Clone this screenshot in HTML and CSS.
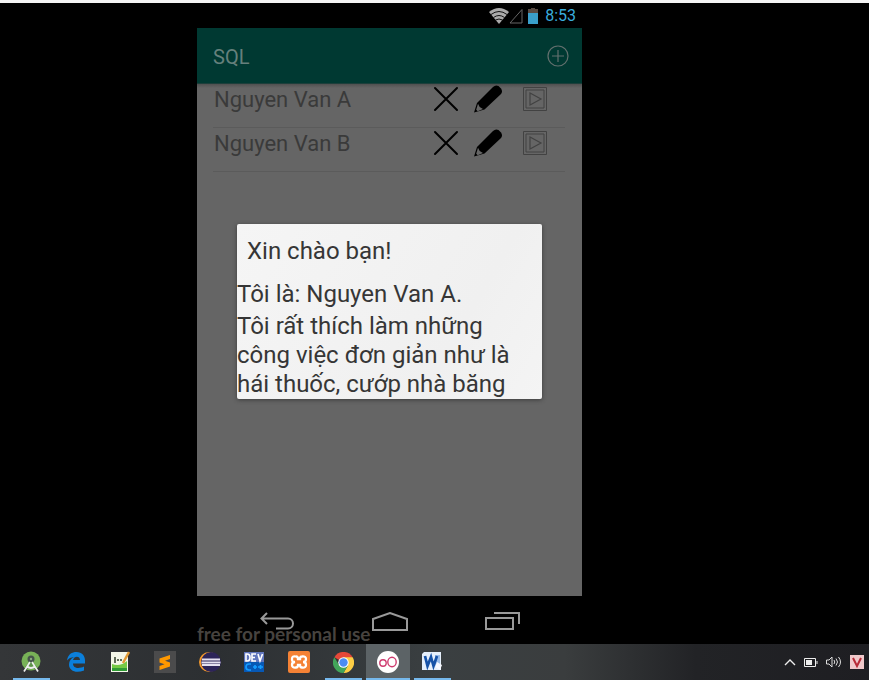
FILE: index.html
```html
<!DOCTYPE html>
<html lang="vi">
<head>
<meta charset="utf-8">
<meta name="viewport" content="width=device-width, initial-scale=1">
<title>SQL</title>
<link rel="stylesheet" href="styles.css">
</head>
<body>
<svg class="defs" aria-hidden="true">
  <symbol id="cross" viewBox="0 0 26 26"><path d="M2 2 24 24M24 2 2 24" fill="none" stroke="#000" stroke-width="2" stroke-linecap="round"/></symbol>
  <symbol id="pencil" viewBox="0 0 28 28"><path fill="#000" d="M0 27.500 3 18 19 2Q21.500-.5 24.500 1L27 3.500Q29 6.500 27 9L10.500 24.500Z"/><path fill="#666" d="m4 18.800 1.700 3.200 3.300 2-5.300 2.200-1.500-1.500Z"/></symbol>
  <symbol id="play" viewBox="0 0 24 24"><g fill="none" stroke="#424242"><path d="M.5.5h23v23H.5zM3 3h18v18H3z"/><path d="M7 6v12l11-6z" stroke-width="1.200"/></g></symbol>
</svg>
<main class="desktop">
  <section class="phone">
    <header class="status">
      <svg width="20" height="16" viewBox="0 0 20 16"><path fill="#aaa" d="M0 4Q10-4 20 4L10 16Z"/><path d="M2 6.500q8-6 16 0M4.500 9.500q5.500-4 11 0M6.500 12q3.500-2 7 0" fill="none" stroke="#111"/></svg>
      <svg width="14" height="16" viewBox="0 0 14 16"><path d="M1 15 13 1.500V15Z" fill="none" stroke="#666"/></svg>
      <svg class="battery" width="10" height="16" viewBox="0 0 10 16"><path fill="#594b43" d="M3 0h4v1h3v5H0V1h3z"/><path fill="#3a9fca" d="M0 5h10v11H0z"/></svg>
      <time>8:53</time>
    </header>
    <div class="appbar">
      <h1>SQL</h1>
      <button class="add" aria-label="Add"><svg width="22" height="22" viewBox="0 0 22 22"><g fill="none" stroke="#62706e" stroke-width="1.200"><circle cx="11" cy="11" r="10"/><path d="M11 5v12M5 11h12"/></g></svg></button>
    </div>
    <div class="content">
      <ul class="people">
        <li><span class="name">Nguyen Van A</span>
          <button aria-label="Delete"><svg width="26" height="26"><use href="#cross"/></svg></button>
          <button aria-label="Edit"><svg width="28" height="28"><use href="#pencil"/></svg></button>
          <button class="view" aria-label="Open"><svg width="24" height="24"><use href="#play"/></svg></button></li>
        <li><span class="name">Nguyen Van B</span>
          <button aria-label="Delete"><svg width="26" height="26"><use href="#cross"/></svg></button>
          <button aria-label="Edit"><svg width="28" height="28"><use href="#pencil"/></svg></button>
          <button class="view" aria-label="Open"><svg width="24" height="24"><use href="#play"/></svg></button></li>
      </ul>
      <div class="dialog" role="dialog" aria-labelledby="greeting">
        <h2 id="greeting">Xin chào bạn!</h2>
        <p class="who">Tôi là: Nguyen Van A.</p>
        <p>Tôi rất thích làm những<br>công việc đơn giản như là<br>hái thuốc, cướp nhà băng</p>
      </div>
    </div>
    <nav class="softkeys">
      <span class="watermark">free for personal use</span>
      <button aria-label="Back"><svg width="34" height="18" viewBox="0 0 34 18"><path d="M7 1 1.500 6.500 7 12M2 6.500h26a5 5 0 0 1 0 10H16" fill="none" stroke="#999" stroke-width="2"/></svg></button>
      <button aria-label="Home"><svg width="36" height="19" viewBox="0 0 36 19"><path d="M1 18V7L18 1l17 6v11Z" fill="none" stroke="#999" stroke-width="2"/></svg></button>
      <button aria-label="Recent"><svg width="35" height="18" viewBox="0 0 35 18"><path d="M1 6h27v11H1zM9 1h25v11" fill="none" stroke="#999" stroke-width="2"/></svg></button>
    </nav>
  </section>
</main>
<footer class="taskbar">
  <div class="apps">
    <button class="open" aria-label="Android Studio"><svg width="22" height="22" viewBox="0 0 22 22"><circle cx="11" cy="10" r="9.500" fill="#78b257"/><path d="m5 16 6-7 6 7-3 2H8z" fill="#5c9348"/><circle cx="11" cy="8" r="3.500" fill="#46554b"/><circle cx="11" cy="8" r="1.200" fill="#8bab80"/><path d="M10 11 4 20.500M12 11l6 9.500M6.500 15q4.500 4 9 0" fill="none" stroke="#eee" stroke-width="1.700"/></svg></button>
    <button aria-label="Edge"><svg width="20" height="22" viewBox="0 0 20 22"><path fill="#0b7fda" d="M1 9.500C2 3 6 1 10.500 1 16 1 19 5 19 9.500v3H7c0 5 6 5.500 11 3v4C10 22.500 3 20 3 13.500 3 10 5 7.500 8 6 5 6.300 2.500 7.500 1 9.500m6-.5h7c0-4.500-6-4.500-7 0"/></svg></button>
    <button aria-label="Notepad"><svg width="20" height="22" viewBox="0 0 20 22"><path fill="#f4f7e8" d="M1 1h17v20H1z"/><path fill="#75ca45" d="M2 13q8 3 15-3v10H2z"/><path fill="#309c35" d="M2 17h15v3H2z"/><path d="M5 6v6M7 9h2M10 9h2" stroke="#30402a" stroke-width="1.500"/><path d="m13 12 6-11" stroke="#e29a34" stroke-width="2.500"/></svg></button>
    <button aria-label="Sublime Text"><svg width="22" height="22" viewBox="0 0 22 22"><path fill="#4b4b4c" d="M0 0h22v22H0z"/><path fill="#ff9800" d="M5.500 7.500 16 4v4l-5 1.700 5 1.800v4L5.500 19v-4l5-1.700-5-1.800z"/></svg></button>
    <button aria-label="Eclipse"><svg width="22" height="22" viewBox="0 0 22 22"><circle cx="10" cy="11" r="10" fill="#f79a2c"/><circle cx="12" cy="11" r="10" fill="#2c2459"/><path stroke="#e4e0f0" stroke-width="1.800" d="M3 8.500h18M2.500 11.500h19M3 14h18"/></svg></button>
    <button aria-label="Dev-C++"><svg width="20" height="20" viewBox="0 0 20 20"><path fill="#6176bd" d="M0 0h20v10H0z"/><path fill="#0758b5" d="M0 10h20v10H0z"/><path d="M2 2v7h1q3 0 3-3.500T3 2ZM12 2H8v7h4M8 5.500h3M14 2l2 7 2.500-7" fill="none" stroke="#fff" stroke-width="1.600"/><path d="M7 12H5q-3 0-3 3t3 3h2M9 15h4m-2-2v4M14 15h5m-2.500-2v4" fill="none" stroke="#159dff" stroke-width="1.700"/></svg></button>
    <button aria-label="XAMPP"><svg width="22" height="22" viewBox="0 0 22 22"><rect width="22" height="22" rx="2" fill="#f58235"/><path d="M8 5.500Q4 4.500 4 8T7 11q-3 0-3 3t4 2.500q2 0 2-2.500h2q0 2.500 2 2.500 4 .5 4-2.500T15 11q3 0 3-3t-4-2.500q-2 0-2 2.500h-2Q10 5.500 8 5.500Z" fill="none" stroke="#fff" stroke-width="2.300"/></svg></button>
    <button class="open" aria-label="Chrome"><svg width="21" height="21" viewBox="0 0 20 20"><path fill="#e54839" d="M10 10 1.300 5A10 10 0 0 1 18.700 5Z"/><path fill="#fdce45" d="M10 5h8.700A10 10 0 0 1 10 20l4-7Z"/><path fill="#42a65a" d="M1.300 5A10 10 0 0 0 10 20l4.300-7.500L5.500 12Z"/><circle cx="10" cy="10" r="5" fill="#fff"/><circle cx="10" cy="10" r="4" fill="#4b8cf3"/></svg></button>
    <button class="open current" aria-label="Genymotion"><svg width="22" height="22" viewBox="0 0 22 22"><circle cx="11" cy="11" r="11" fill="#fff"/><g fill="none" stroke="#cf3c70" stroke-width="1.400"><circle cx="6" cy="12" r="3.200"/><ellipse cx="15" cy="11" rx="4.200" ry="4.700"/></g></svg></button>
    <button class="open" aria-label="Word"><svg width="21" height="20" viewBox="0 0 21 20"><path fill="#e5effb" d="M2 0h17v18H0V2z"/><path fill="#9abce8" d="M13 3h5v12h-5z"/><path d="m3 4 2.500 10L9 5l2.500 9L15 4" fill="none" stroke="#1652a7" stroke-width="2.700"/><path fill="#f7f9ff" d="m15 10 5 3-2 5-5-3z"/></svg></button>
  </div>
  <div class="tray">
    <button aria-label="Show hidden icons"><svg width="12" height="8" viewBox="0 0 12 8"><path d="m1 7 5-5 5 5" fill="none" stroke="#eee" stroke-width="1.400"/></svg></button>
    <button aria-label="Battery"><svg width="14" height="9" viewBox="0 0 14 9"><path d="M.5.5h11v8H.5zM13 3v3" fill="none" stroke="#eee"/><path fill="#eee" d="M2 2h6v5H2z"/></svg></button>
    <button aria-label="Volume"><svg width="16" height="12" viewBox="0 0 16 12"><path d="M.5 4v4H3l3 3V1L3 4ZM8 4q1.500 2 0 4M10 2.500q3 3.500 0 7M12.500 1q4 5 0 10" fill="none" stroke="#ddd"/></svg></button>
    <button aria-label="Vietnamese keyboard"><svg width="14" height="14" viewBox="0 0 14 14"><path fill="#f0c9cb" d="M0 0h14v14H0z"/><path d="m3 3 4 8 4-8" fill="none" stroke="#b82b37" stroke-width="2"/></svg></button>
  </div>
</footer>
</body>
</html>
```
FILE: styles.css
```css
* { box-sizing: border-box; }
body {
  margin: 0;
  min-height: 100vh;
  display: flex;
  flex-direction: column;
  background: #000;
  border-top: 3px solid #f4f4f4;
  font-family: Roboto, "Noto Sans", sans-serif;
}
h1, h2, p, ul { margin: 0; padding: 0; font-weight: 400; }
button { border: 0; padding: 0; background: none; display: grid; place-items: center; }
svg { display: block; }
.defs { position: absolute; width: 0; height: 0; }

.desktop {
  flex: 1;
  display: grid;
  grid-template-columns: 197px minmax(300px, 385px) 1fr;
}
.phone { grid-column: 2; display: flex; flex-direction: column; }
.status {
  height: 25px;
  display: flex;
  align-items: center;
  justify-content: flex-end;
  padding-right: 6px;
  color: #3aaddc;
  font-size: 16px;
}
.battery { margin: 0 7px 0 5px; }

.appbar {
  height: 56px;
  padding: 0 13px 0 16px;
  display: flex;
  align-items: center;
  justify-content: space-between;
  background: #003932;
  border-bottom: 1px solid #1d3f3b;
}
.appbar h1 { font-size: 20px; line-height: 24px; padding-top: 2px; color: #66807c; }

.content {
  flex: 1;
  padding: 0 17px 0 16px;
  background: linear-gradient(#505050, #656565 4px);
}
.people { list-style: none; }
.people li {
  height: 44px;
  display: flex;
  align-items: center;
  padding: 0 18px 14px 1px;
  border-bottom: 1px solid #5b5b5b;
}
.name { flex: 1; font-size: 22px; line-height: 30px; padding-top: 2px; color: #3a3a3a; }
.people button { width: 42px; height: 28px; }
.people .view { width: 24px; margin-left: 14px; }

.dialog {
  margin: 52px 23px 0 24px;
  height: 175px;
  padding-top: 13px;
  background: linear-gradient(120deg, #f5f5f5, #f0f0f0 70%, #f4f4f4);
  border-radius: 2px;
  box-shadow: 0 1px 4px #3c3c3c;
  color: #363636;
  font-size: 24px;
  line-height: 29px;
  white-space: nowrap;
}
.dialog h2 { font-size: 24px; padding-left: 10px; margin-bottom: 14px; }
.who { margin-bottom: 3px; }

.softkeys {
  position: relative;
  height: 48px;
  display: flex;
  justify-content: space-between;
  align-items: center;
  padding: 2px 62px 0 63px;
}
.softkeys button { position: relative; }
.watermark {
  position: absolute;
  left: 0;
  bottom: 0;
  font: 700 19px/20px Lato, sans-serif;
  color: #47433f;
}

.taskbar {
  height: 36px;
  display: flex;
  justify-content: space-between;
  padding: 0 5px 0 9px;
  background: linear-gradient(90deg, #343638, #2c2f32 25%, #3a3f41 50%, #3a3d3e 65%, #222326 80%, #1e1e22);
}
.apps { display: grid; grid-template-columns: repeat(10, 1fr); flex: 0 1 446px; }
.apps button { position: relative; }
.current { background: #5c6366; }
.open::after {
  content: "";
  position: absolute;
  bottom: 0;
  left: 4px;
  right: 4px;
  height: 2px;
  background: #76b9ed;
}
.current::after { left: 0; right: 0; }
.tray { display: flex; align-items: center; gap: 8px; }
```
